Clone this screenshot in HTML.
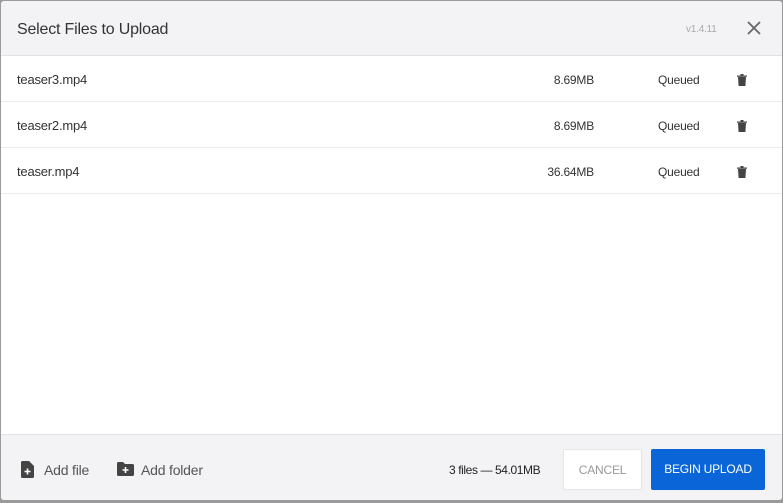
<!DOCTYPE html>
<html><head><style>
*{margin:0;padding:0;box-sizing:border-box}
body{width:783px;height:503px;background:#9a9a9a;font-family:"Liberation Sans",sans-serif;overflow:hidden;position:relative;letter-spacing:-0.2px}
.dlg{position:absolute;left:1px;top:1px;width:781px;height:499px;background:#fff;border-radius:3px;overflow:hidden}
.hd{position:absolute;left:0;top:0;width:100%;height:55px;background:#f3f3f5;border-bottom:1px solid #e2e2e4}
.title{position:absolute;left:16px;top:20px;font-size:16px;color:#333}
.ver{position:absolute;left:685px;top:23px;font-size:10px;color:#aaa}
.row{position:absolute;left:0;width:100%;height:46px;border-bottom:1px solid #ececec;font-size:13px;color:#333}
.row .n{position:absolute;left:16px;top:16px}
.row .s{position:absolute;right:188px;top:17px;font-size:12px}
.row .q{position:absolute;left:657px;top:17px;font-size:12px}
.row svg{position:absolute;left:736px;top:18px}
.ft{position:absolute;left:0;top:433px;width:100%;height:66px;background:#f3f3f5;border-top:1px solid #e2e2e4}
.ft .t{position:absolute;font-size:14px;color:#555;top:27px}
.btn{position:absolute;top:14px;height:41px;font-size:12px;text-align:center;line-height:41px;border-radius:2px}
</style></head><body>
<div class="dlg">
<div class="hd"><div class="title">Select Files to Upload</div><div class="ver">v1.4.11</div>
<svg style="position:absolute;left:746px;top:20px" width="14" height="14" viewBox="0 0 14 14"><path d="M1 1L13 13M13 1L1 13" stroke="#666" stroke-width="1.8"/></svg></div>
<div class="row" style="top:55px"><span class="n">teaser3.mp4</span><span class="s">8.69MB</span><span class="q">Queued</span><svg width="10" height="12" viewBox="0 0 10 12"><path d="M0 1.5h10v1.2H0zM3.5 0h3v1.5h-3zM1 3h8l-.6 9H1.6z" fill="#444"/></svg></div>
<div class="row" style="top:101px"><span class="n">teaser2.mp4</span><span class="s">8.69MB</span><span class="q">Queued</span><svg width="10" height="12" viewBox="0 0 10 12"><path d="M0 1.5h10v1.2H0zM3.5 0h3v1.5h-3zM1 3h8l-.6 9H1.6z" fill="#444"/></svg></div>
<div class="row" style="top:147px"><span class="n">teaser.mp4</span><span class="s">36.64MB</span><span class="q">Queued</span><svg width="10" height="12" viewBox="0 0 10 12"><path d="M0 1.5h10v1.2H0zM3.5 0h3v1.5h-3zM1 3h8l-.6 9H1.6z" fill="#444"/></svg></div>
<div class="ft">
<svg style="position:absolute;left:20px;top:26px" width="13" height="17" viewBox="0 0 13 17"><path d="M0 1.5Q0 0 1.5 0H8l5 5v10.5Q13 17 11.5 17h-10Q0 17 0 15.5z" fill="#444"/><path d="M6.5 7.5v6M3.5 10.5h6" stroke="#fff" stroke-width="1.6"/></svg>
<span class="t" style="left:43px">Add file</span>
<svg style="position:absolute;left:116px;top:27px" width="17" height="14" viewBox="0 0 17 14"><path d="M0 1.5Q0 0 1.5 0H6l2 2h7.5Q17 2 17 3.5v9Q17 14 15.5 14h-14Q0 14 0 12.5z" fill="#444"/><path d="M8.5 5v6M5.5 8h6" stroke="#fff" stroke-width="1.6"/></svg>
<span class="t" style="left:140px">Add folder</span>
<span style="position:absolute;left:448px;top:28px;font-size:12px;color:#222;letter-spacing:-0.4px">3 files — 54.01MB</span>
<div class="btn" style="left:562px;width:79px;background:#fff;color:#999;border:1px solid #e6e6e6">CANCEL</div>
<div class="btn" style="left:650px;width:114px;background:#0a66d8;color:#fff">BEGIN UPLOAD</div>
</div>
</div>
</body></html>
